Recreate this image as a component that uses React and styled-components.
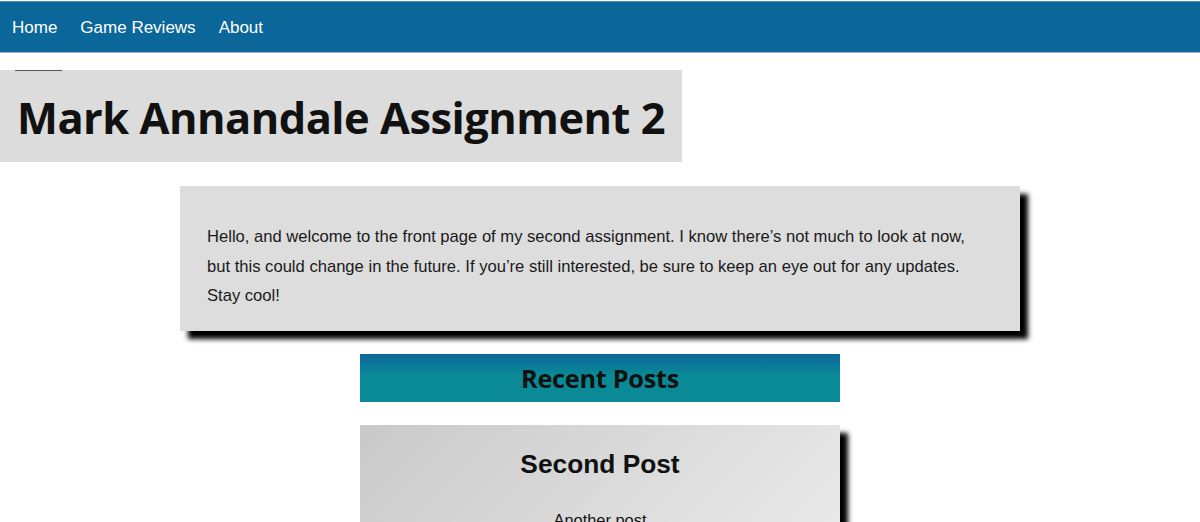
import React from "react";
import styled, { createGlobalStyle } from "styled-components";

const Global = createGlobalStyle`
  html, body {
    margin: 0;
    padding: 0;
    background: #ffffff;
    font-family: "Liberation Sans", Arial, sans-serif;
  }
`;

const Nav = styled.nav`
  display: flex;
  align-items: center;
  gap: 23px;
  height: 52px;
  margin-top: 1px;
  padding: 2px 12px 0;
  box-sizing: border-box;
  background-color: #0b6699;
  border-top: 1px solid #4b8fbb;
  border-bottom: 1px solid #8fb5d0;
  a {
    color: #ffffff;
    font-size: 17px;
    text-decoration: none;
  }
`;

const Header = styled.header`
  position: relative;
  display: inline-block;
  margin-top: 17px;
  padding: 0 17px;
  background-color: #dcdcdc;
  &::before {
    content: "";
    position: absolute;
    left: 15px;
    top: 0;
    width: 47px;
    height: 1px;
    background: #555;
  }
  h1 {
    margin: 0;
    height: 92px;
    line-height: 96px;
    font-family: "Open Sans", "Noto Sans", sans-serif;
    font-weight: 700;
    font-size: 43.4px;
    letter-spacing: -0.5px;
    color: #111;
  }
`;

const Intro = styled.section`
  width: 840px;
  box-sizing: border-box;
  margin: 24px auto 0;
  padding: 36px 28px 20px 27px;
  background-color: #dddddd;
  box-shadow: 8px 8px 5px #000;
  p {
    margin: 0;
    font-size: 16.6px;
    line-height: 29.5px;
    color: #1a1a1a;
  }
`;

const Heading = styled.div`
  width: 480px;
  height: 48px;
  margin: 23px auto 0;
  background: linear-gradient(to bottom, #0b6699 0%, #0a8a96 45%, #0a8a96 100%);
  display: flex;
  align-items: center;
  justify-content: center;
  h2 {
    margin: 0;
    font-family: "Open Sans", "Noto Sans", sans-serif;
    font-weight: 700;
    font-size: 25.3px;
    letter-spacing: -0.3px;
    color: #111;
  }
`;

const Card = styled.article`
  width: 480px;
  margin: 23px auto 40px;
  padding-top: 24px;
  background: linear-gradient(135deg, #c9c9c9 0%, #ececec 100%);
  box-shadow: 8px 8px 5px #000;
  text-align: center;
  h3 {
    margin: 0;
    font-size: 26.3px;
    font-weight: 700;
    color: #111;
  }
  p {
    margin: 31px 0 0;
    padding-bottom: 40px;
    font-size: 16.4px;
    color: #111;
  }
`;

export default function App() {
  return (
    <>
      <Global />
      <Nav>
        <a href="#">Home</a>
        <a href="#">Game Reviews</a>
        <a href="#">About</a>
      </Nav>
      <Header>
        <h1>Mark Annandale Assignment 2</h1>
      </Header>
      <Intro>
        <p>
          Hello, and welcome to the front page of my second assignment. I know
          there’s not much to look at now, but this could change in the future.
          If you’re still interested, be sure to keep an eye out for any
          updates. Stay cool!
        </p>
      </Intro>
      <Heading>
        <h2>Recent Posts</h2>
      </Heading>
      <Card>
        <h3>Second Post</h3>
        <p>Another post</p>
      </Card>
    </>
  );
}
